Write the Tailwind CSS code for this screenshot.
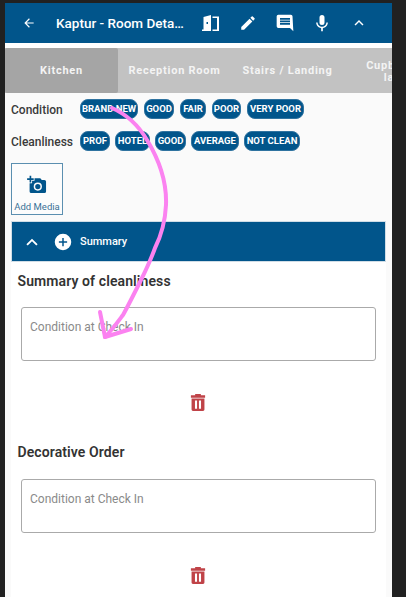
<!DOCTYPE html>
<html>
<head>
<meta charset="utf-8">
<script src="https://cdn.jsdelivr.net/npm/@tailwindcss/browser@4"></script>
</head>
<body class="m-0 bg-[#212121] font-['Roboto',sans-serif]">
<div class="relative h-[597px] w-[406px] overflow-hidden bg-[#212121] pl-[5px] pt-[3px]">
  <div class="h-[594px] w-[387px] overflow-hidden bg-[#fafafa]">
    <header class="flex h-[40px] items-center bg-[#01558b] text-white">
      <svg class="ml-[17px] h-[14px] w-[14px]" viewBox="0 0 24 24" fill="#fff"><path d="M20 11H7.800l5.600-5.600L12 4l-8 8 8 8 1.400-1.400L7.800 13H20z"/></svg>
      <h1 class="mt-[1px] ml-[20px] w-[130px] truncate text-[13.500px] font-medium">Kaptur - Room Details</h1>
      <svg class="ml-[16px] h-[16px] w-[17px]" viewBox="0 0 17 16" fill="#fff"><path d="M0 14.500h1.500V2L9 0v16H0zM4.500 7v2H6V7zM10.500 1.500H17v14.500h-6.500v-1.500h4.500V3h-4.500z"/></svg>
      <svg class="ml-[20px] h-[18px] w-[18px]" viewBox="0 0 24 24" fill="#fff"><path d="M3 17.250V21h3.750L17.810 9.940l-3.750-3.750zM20.710 7.040a1 1 0 0 0 0-1.410l-2.340-2.340a1 1 0 0 0-1.410 0l-1.830 1.830 3.750 3.750z"/></svg>
      <svg class="ml-[18px] h-[20px] w-[20px]" viewBox="0 0 24 24" fill="#fff"><path d="M21 4a2 2 0 0 0-2-2H4a2 2 0 0 0-2 2v12a2 2 0 0 0 2 2h14l4 4zM18 14H6v-2h12zm0-3H6V9h12zm0-3H6V6h12z"/></svg>
      <svg class="ml-[17px] h-[20px] w-[20px]" viewBox="0 0 24 24" fill="#fff"><path d="M12 14.500a3 3 0 0 0 3-3v-6a3 3 0 0 0-6 0v6a3 3 0 0 0 3 3zm5.300-3c0 3-2.500 5.100-5.300 5.100s-5.300-2.100-5.300-5.100H5c0 3.400 2.700 6.200 6 6.700V22h2v-3.800c3.300-.5 6-3.300 6-6.700z"/></svg>
      <svg class="ml-[18px] h-[18px] w-[18px]" viewBox="0 0 24 24" fill="#fff"><path d="M12 8l-6 6 1.400 1.400L12 10.800l4.600 4.600L18 14z"/></svg>
    </header>
    <div class="h-[5px] bg-white"></div>
    <nav class="flex h-[45px] overflow-hidden bg-[#c2c2c2] text-[11px] font-bold tracking-[0.75px] text-[#f4f4f4]">
      <div class="flex w-[113px] shrink-0 items-center justify-center rounded-[2px] bg-[#a5a5a5] pt-[2px]">Kitchen</div>
      <div class="flex w-[113px] shrink-0 items-center justify-center pt-[2px] whitespace-nowrap">Reception Room</div>
      <div class="flex w-[113px] shrink-0 items-center justify-center pt-[2px] whitespace-nowrap">Stairs / Landing</div>
      <div class="flex w-[113px] shrink-0 items-center justify-center pt-[2px] text-center leading-[12px] whitespace-nowrap">Cupboards /<br>larder</div>
    </nav>
    <section class="mt-[6px] flex h-[20px] items-center pl-[6px]">
      <span class="w-[69px] pt-[1px] text-[12px] font-medium text-[#3a3a3a]">Condition</span>
      <div class="flex gap-[6px]">
        <span class="flex h-[20px] w-[58px] items-center justify-center rounded-[8px] border border-[#2f73a0] bg-[#01558b] text-[9.500px] font-bold whitespace-nowrap text-white">BRAND NEW</span>
        <span class="flex h-[20px] w-[30px] items-center justify-center rounded-[8px] border border-[#2f73a0] bg-[#01558b] text-[9.500px] font-bold text-white">GOOD</span>
        <span class="flex h-[20px] w-[26px] items-center justify-center rounded-[8px] border border-[#2f73a0] bg-[#01558b] text-[9.500px] font-bold text-white">FAIR</span>
        <span class="flex h-[20px] w-[29px] items-center justify-center rounded-[8px] border border-[#2f73a0] bg-[#01558b] text-[9.500px] font-bold text-white">POOR</span>
        <span class="flex h-[20px] w-[57px] items-center justify-center rounded-[8px] border border-[#2f73a0] bg-[#01558b] text-[9.500px] font-bold whitespace-nowrap text-white">VERY POOR</span>
      </div>
    </section>
    <section class="mt-[12px] flex h-[20px] items-center pl-[6px]">
      <span class="w-[69px] pt-[1px] text-[12px] font-medium text-[#3a3a3a]">Cleanliness</span>
      <div class="flex gap-[5px]">
        <span class="flex h-[20px] w-[30px] items-center justify-center rounded-[8px] border border-[#2f73a0] bg-[#01558b] text-[9.500px] font-bold text-white">PROF</span>
        <span class="flex h-[20px] w-[35px] items-center justify-center rounded-[8px] border border-[#2f73a0] bg-[#01558b] text-[9.500px] font-bold text-white">HOTEL</span>
        <span class="flex h-[20px] w-[31px] items-center justify-center rounded-[8px] border border-[#2f73a0] bg-[#01558b] text-[9.500px] font-bold text-white">GOOD</span>
        <span class="flex h-[20px] w-[48px] items-center justify-center rounded-[8px] border border-[#2f73a0] bg-[#01558b] text-[9.500px] font-bold text-white">AVERAGE</span>
        <span class="flex h-[20px] w-[56px] items-center justify-center rounded-[8px] border border-[#2f73a0] bg-[#01558b] text-[9.500px] font-bold whitespace-nowrap text-white">NOT CLEAN</span>
      </div>
    </section>
    <div class="mt-[12px] ml-[6px] flex h-[52px] w-[52px] flex-col items-center border border-[#5b8fb0] bg-[#fcfcfc]">
      <svg class="mt-[11px] h-[20px] w-[20px]" viewBox="0 0 24 24" fill="#01558b"><path d="M3 4V1h2v3h3v2H5v3H3V6H0V4zm3 6V7h3V4h7l1.830 2H21a2 2 0 0 1 2 2v12a2 2 0 0 1-2 2H5a2 2 0 0 1-2-2V10zm7 9a5 5 0 1 0 0-10 5 5 0 0 0 0 10zm-3.200-5a3.200 3.200 0 1 0 6.400 0 3.200 3.200 0 0 0-6.400 0z"/></svg>
      <span class="mt-[5px] text-[9.500px] whitespace-nowrap text-[#3a7298]">Add Media</span>
    </div>
    <div class="mx-[6px] mt-[6px] flex h-[41px] items-center border border-[#d0dde6] bg-[#01558b] text-white">
      <svg class="ml-[11px] h-[18px] w-[18px]" viewBox="0 0 24 24" fill="#fff"><path d="M12 7.500l-7.500 7.500 1.800 1.800L12 11.100l5.700 5.700 1.800-1.800z"/></svg>
      <svg class="ml-[13px] h-[18px] w-[18px]" viewBox="0 0 24 24" fill="#fff"><path d="M12 1a11 11 0 1 0 0 22 11 11 0 0 0 0-22zm5.500 12H13v4.500h-2V13H6.500v-2H11V6.500h2V11h4.500z"/></svg>
      <span class="ml-[8px] pt-[1px] text-[11px] font-medium">Summary</span>
    </div>
    <main class="mx-[6px] h-[340px] bg-white">
      <h2 class="pt-[10px] pl-[6.500px] text-[14px] leading-[18px] font-semibold tracking-[0.1px] text-[#333]">Summary of cleanliness</h2>
      <div class="mt-[17px] ml-[10px] h-[54px] w-[355px] rounded-[3px] border border-[#aaa] bg-white px-[8px] pt-[12px] text-[12px] leading-[14px] text-[#8a8a8a]">Condition at Check In</div>
      <svg class="mt-[32px] ml-[177px] block h-[18px] w-[20px]" viewBox="0 0 20 19" fill="#c04348"><path d="M2.500 2.500H7V1h6v1.500h4.500V5h-15zM3.200 5.800h13.600V17.500a1.500 1.500 0 0 1-1.500 1.500H4.700a1.500 1.500 0 0 1-1.500-1.500zM6.800 8v8.500h2.200V8zm4.200 0v8.500h2.200V8z"/></svg>
      <h2 class="mt-[32px] pl-[6.500px] text-[14px] leading-[18px] font-semibold tracking-[0.1px] text-[#333]">Decorative Order</h2>
      <div class="mt-[18px] ml-[10px] h-[54px] w-[355px] rounded-[3px] border border-[#aaa] bg-white px-[8px] pt-[12px] text-[12px] leading-[14px] text-[#8a8a8a]">Condition at Check In</div>
      <svg class="mt-[33px] ml-[177px] block h-[18px] w-[20px]" viewBox="0 0 20 19" fill="#c04348"><path d="M2.500 2.500H7V1h6v1.500h4.500V5h-15zM3.200 5.800h13.600V17.500a1.500 1.500 0 0 1-1.500 1.500H4.700a1.500 1.500 0 0 1-1.500-1.500zM6.800 8v8.500h2.200V8zm4.200 0v8.500h2.200V8z"/></svg>
    </main>
  </div>
  <svg class="absolute top-0 left-0 h-[597px] w-[406px]" viewBox="0 0 406 597" fill="none" stroke="#fb82f0" stroke-width="4" stroke-linecap="round" stroke-linejoin="round">
    <path d="M112 108C128 115 140 128 147 140C158 158 167 180 166 205C165 225 160 238 155 248C150 262 147 268 140 282C133 296 128 306 123 315C117 323 112 330 105 337"/>
    <path d="M100 312L105 337 131 329"/>
  </svg>
</div>
</body>
</html>
